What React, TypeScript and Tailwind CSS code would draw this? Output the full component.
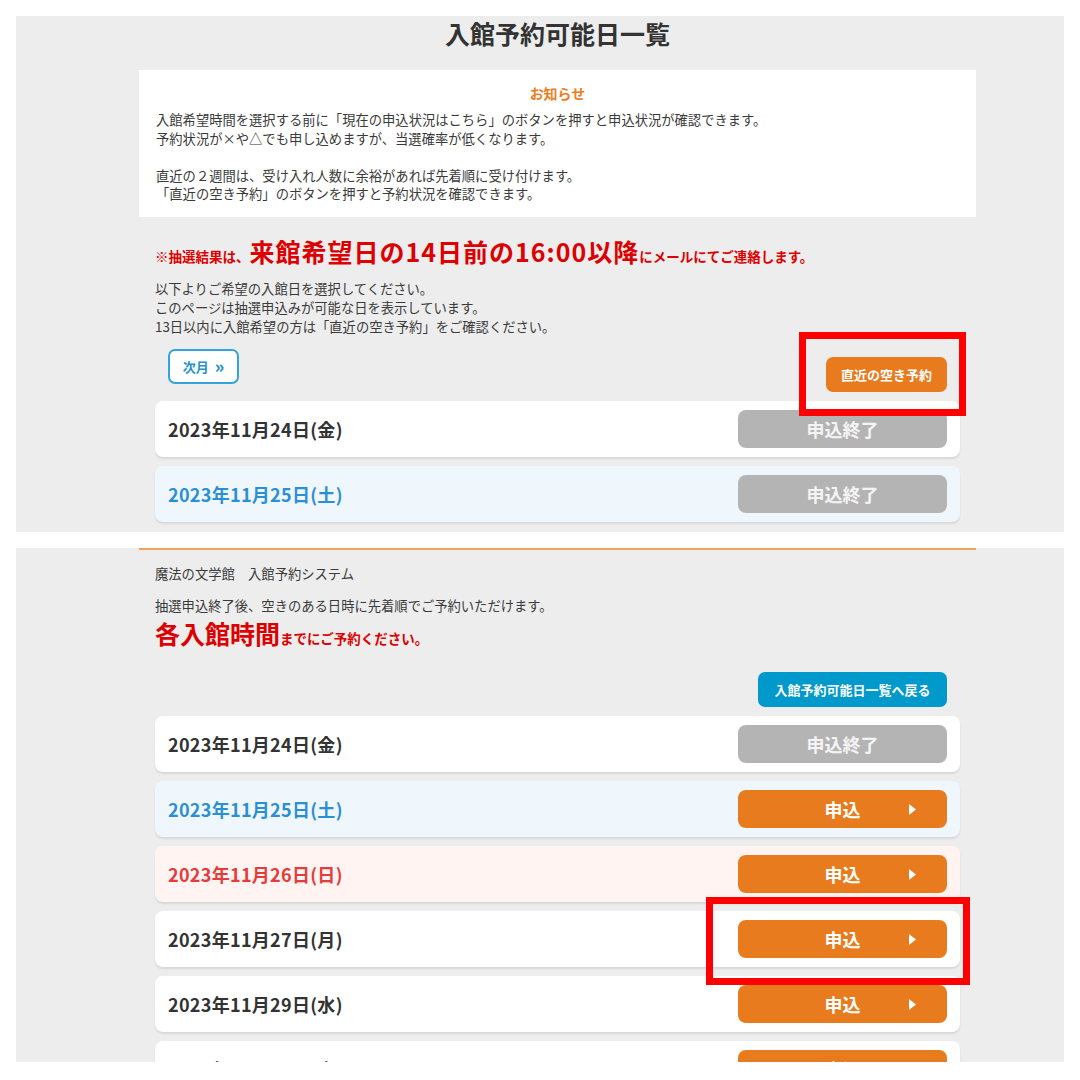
import React from "react";

type Tone = "weekday" | "sat" | "sun";

type Day = {
  date: string;
  tone: Tone;
  closed: boolean;
};

const toneRow: Record<Tone, string> = {
  weekday: "bg-white text-[#333333]",
  sat: "bg-[#eff7fd] text-[#2b8fd5]",
  sun: "bg-[#fff4f2] text-[#e63b3b]",
};

const lotteryDays: Day[] = [
  { date: "2023年11月24日(金)", tone: "weekday", closed: true },
  { date: "2023年11月25日(土)", tone: "sat", closed: true },
];

const recentDays: Day[] = [
  { date: "2023年11月24日(金)", tone: "weekday", closed: true },
  { date: "2023年11月25日(土)", tone: "sat", closed: false },
  { date: "2023年11月26日(日)", tone: "sun", closed: false },
  { date: "2023年11月27日(月)", tone: "weekday", closed: false },
  { date: "2023年11月29日(水)", tone: "weekday", closed: false },
  { date: "2023年11月30日(木)", tone: "weekday", closed: false },
];

function DateRow({ day }: { day: Day }) {
  return (
    <div
      className={`h-[56px] shrink-0 rounded-[8px] flex items-center justify-between pl-[13px] pr-[13px] shadow-[0_2px_2px_rgba(0,0,0,0.09)] ${toneRow[day.tone]}`}
    >
      <span className="text-[18px] tracking-[0.3px] font-bold leading-none">{day.date}</span>
      {day.closed ? (
        <div className="w-[209px] h-[38px] rounded-[8px] bg-[#b4b4b4] flex items-center justify-center text-[18px] font-bold text-[#f4f4f4]">
          申込終了
        </div>
      ) : (
        <div className="relative w-[209px] h-[38px] rounded-[8px] bg-[#e77b1d] flex items-center justify-center text-[18px] font-bold text-white">
          申込
          <svg
            className="absolute right-[31px] top-[14px]"
            width="7"
            height="11"
            viewBox="0 0 7 11"
          >
            <polygon points="0,0 7,5.5 0,11" fill="#ffffff" />
          </svg>
        </div>
      )}
    </div>
  );
}

export default function App() {
  return (
    <div
      className="relative w-[1080px] h-[1080px] bg-white overflow-hidden flex flex-col px-[16px] pt-[16px] text-[#333333]"
      style={{ fontFamily: '"Noto Sans CJK JP", "Noto Sans", sans-serif' }}
    >
      {/* 上：入館予約可能日一覧 */}
      <section className="h-[516px] shrink-0 bg-[#ededed] overflow-hidden pl-[123px] pr-[88px]">
        <h1 className="pt-[1px] h-[54px] text-center text-[25px] leading-[32px] font-bold text-[#333333]">
          入館予約可能日一覧
        </h1>

        <div className="bg-white h-[147px] pt-[13px] px-[17px]">
          <p className="text-center text-[14px] leading-[20px] font-bold text-[#ee7d1d]">
            お知らせ
          </p>
          <div className="mt-[8px] text-[13.3px] leading-[18.5px] text-[#3a3a3a]">
            <p>入館希望時間を選択する前に「現在の申込状況はこちら」のボタンを押すと申込状況が確認できます。</p>
            <p>予約状況が×や△でも申し込めますが、当選確率が低くなります。</p>
            <p className="h-[18.5px]"></p>
            <p>直近の２週間は、受け入れ人数に余裕があれば先着順に受け付けます。</p>
            <p>「直近の空き予約」のボタンを押すと予約状況を確認できます。</p>
          </div>
        </div>

        <div className="px-[16px]">
          <p className="mt-[17px] h-[34px] flex items-baseline font-bold text-[#dd0000] whitespace-nowrap">
            <span className="text-[13.5px] leading-[34px]">※抽選結果は、</span>
            <span className="text-[25px] leading-[34px] tracking-[1px]">来館希望日の14日前の16:00以降</span>
            <span className="text-[13.5px] leading-[34px]">にメールにてご連絡します。</span>
          </p>

          <div className="mt-[10.5px] text-[13.3px] leading-[19px] text-[#3a3a3a]">
            <p>以下よりご希望の入館日を選択してください。</p>
            <p>このページは抽選申込みが可能な日を表示しています。</p>
            <p>13日以内に入館希望の方は「直近の空き予約」をご確認ください。</p>
          </div>

          <div className="mt-[13.5px] flex items-start justify-between">
            <button className="ml-[13px] w-[71px] h-[35px] rounded-[7px] border-2 border-[#33a5d8] bg-white flex items-center justify-center gap-[6px] text-[13px] font-bold text-[#2590cc]">
              <span>次月</span>
              <span className="text-[17px] leading-none font-black -mt-[2px]">»</span>
            </button>
            <button className="mt-[8px] mr-[13px] w-[121px] h-[35px] rounded-[7px] bg-[#e77b1d] text-[13px] font-bold text-white">
              直近の空き予約
            </button>
          </div>

          <div className="mt-[9px] flex flex-col gap-[9px]">
            {lotteryDays.map((d) => (
              <DateRow key={d.date} day={d} />
            ))}
          </div>
        </div>
      </section>

      {/* 下：直近の空き予約 */}
      <section className="mt-[16px] h-[514px] shrink-0 bg-[#ededed] overflow-hidden pl-[123px] pr-[88px]">
        <div className="border-t-2 border-[#f2a25b] px-[16px]">
          <p className="mt-[14px] text-[13.3px] leading-[19px] text-[#3a3a3a]">
            魔法の文学館　入館予約システム
          </p>
          <p className="mt-[13px] text-[13.3px] leading-[19px] text-[#3a3a3a]">
            抽選申込終了後、空きのある日時に先着順でご予約いただけます。
          </p>
          <p className="mt-[2px] h-[32px] flex items-baseline font-bold text-[#dd0000] whitespace-nowrap">
            <span className="text-[25px] leading-[32px]">各入館時間</span>
            <span className="text-[13.5px] leading-[32px]">までにご予約ください。</span>
          </p>

          <div className="mt-[23px] flex justify-end">
            <button className="mr-[13px] w-[189px] h-[35px] rounded-[7px] bg-[#0099cb] text-[13px] font-bold text-white">
              入館予約可能日一覧へ戻る
            </button>
          </div>

          <div className="mt-[9px] flex flex-col gap-[9px]">
            {recentDays.map((d) => (
              <DateRow key={d.date} day={d} />
            ))}
          </div>
        </div>
      </section>

      {/* 注釈の赤枠 */}
      <div className="absolute left-[799px] top-[332px] w-[167px] h-[84px] border-[7px] border-[#ff0000] pointer-events-none" />
      <div className="absolute left-[706px] top-[897px] w-[264px] h-[88px] border-[7px] border-[#ff0000] pointer-events-none" />
    </div>
  );
}
